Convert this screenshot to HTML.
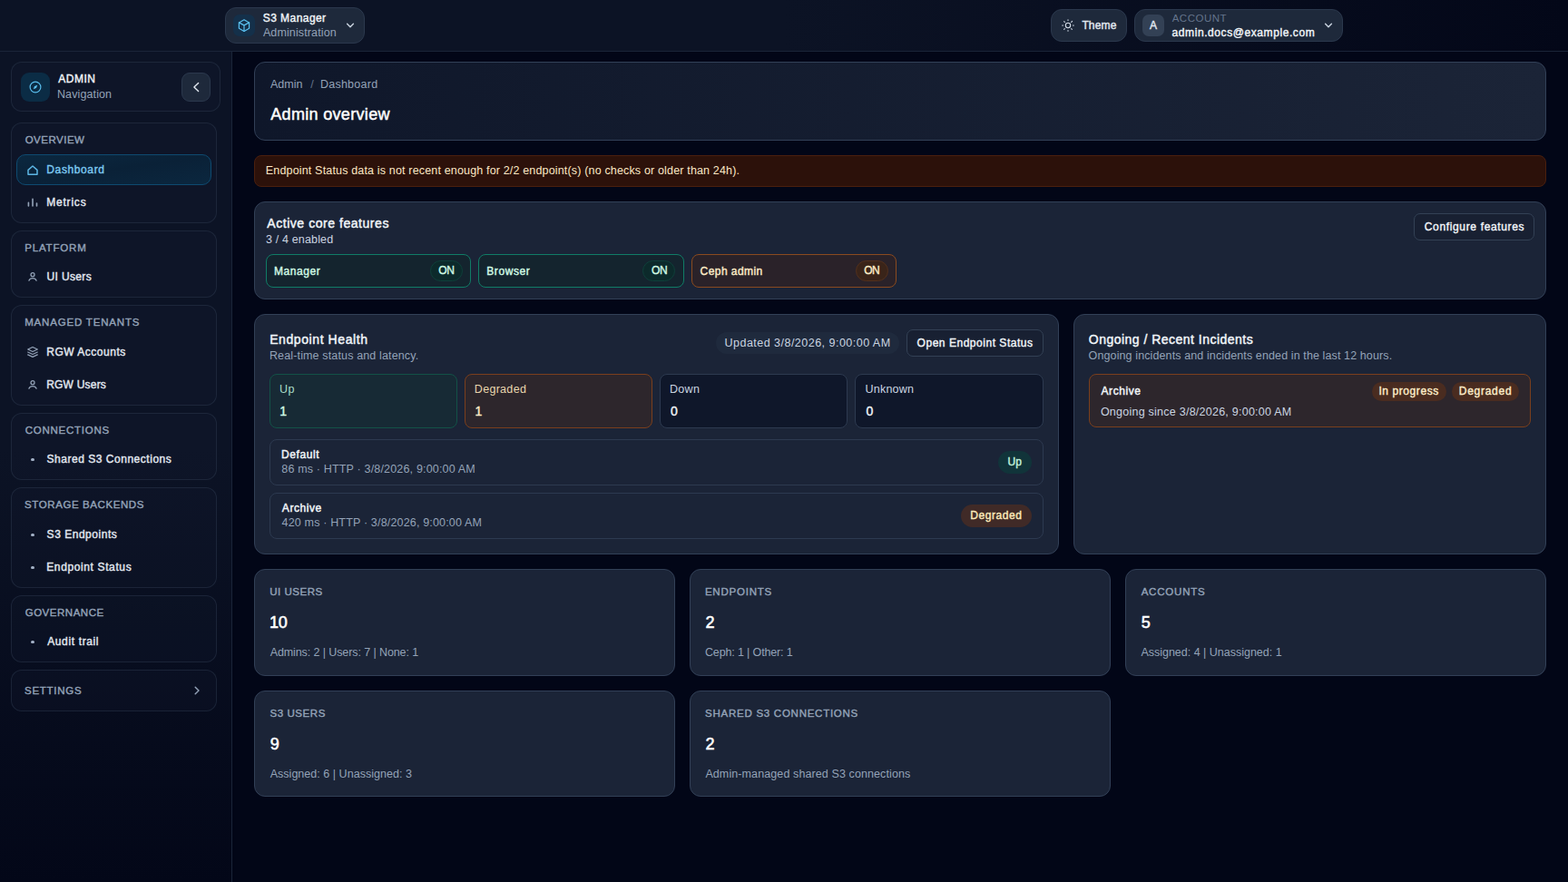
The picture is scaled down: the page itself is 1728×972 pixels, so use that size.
<!DOCTYPE html>
<html lang="en">
<head>
<meta charset="utf-8">
<title>S3 Manager - Admin overview</title>
<style>
*{box-sizing:border-box;margin:0;padding:0}
html,body{width:1728px;height:972px;overflow:hidden;background:#020617;}
body{font-family:"Liberation Sans",sans-serif;color:#e2e8f0;font-size:12px;position:relative;-webkit-font-smoothing:antialiased}
.abs{position:absolute}
.t{position:absolute;white-space:nowrap;line-height:1;display:block}
svg{display:block}
/* header */
#topbar{position:absolute;left:0;top:0;width:1728px;height:57px;background:linear-gradient(90deg,#0c1325 0%,#0c1325 50%,#030718 100%);border-bottom:1px solid #1a2438}
.pill{position:absolute;background:#1e293b;border:1px solid #2b384d;border-radius:12px}
/* sidebar */
#sidebar{position:absolute;left:0;top:57px;width:256px;height:915px;background:linear-gradient(180deg,#0c1325 0%,#0c1325 48%,#030718 100%);border-right:1px solid #1a2438}
#main{position:absolute;left:256px;top:57px;width:1472px;height:915px;background:#020617}
.sgroup{position:absolute;left:12px;width:227px;border:1px solid rgba(51,65,85,.42);border-radius:12px;background:rgba(30,41,59,.13)}
.slabel{position:absolute;left:15px;font-size:11.5px;font-weight:400;-webkit-text-stroke:.4px;color:#94a3b8;letter-spacing:.6px;line-height:1;white-space:nowrap}
.sitem{position:absolute;left:5px;width:215px;height:34px;border-radius:10px;border:1px solid transparent}
.sitem .lbl{position:absolute;left:33px;top:10px;font-size:12px;font-weight:400;-webkit-text-stroke:.4px;color:#e2e8f0;line-height:1;white-space:nowrap}
.sitem svg{position:absolute;left:10px;top:9px}
.sitem .dot{position:absolute;left:15.200px;top:14.500px;width:3.600px;height:3.600px;border-radius:50%;background:#a3b1c6}
.sitem.active{background:linear-gradient(to bottom right,#0b2840 0%,#0a2137 50%,#0b273f 100%);border-color:#0e4a70}
.sitem.active .lbl{color:#7cc8f0}
/* main */
.card{position:absolute;background:#1b2437;border:1px solid #324057;border-radius:12px}
.h{font-weight:400;-webkit-text-stroke:.45px;color:#f1f5f9}
.sb{font-weight:400;-webkit-text-stroke:.4px}
.mut{color:#94a3b8}
.badge{position:absolute;border-radius:999px;font-weight:400;-webkit-text-stroke:.4px;font-size:12px;line-height:1;white-space:nowrap}
.fpill{border-radius:8px;border:1px solid}
.fpill.g{background:#14242e;border-color:#107c66}
.fpill.o{background:#2a2229;border-color:#8a4a1f}
.fpill>.t{font-size:12px;font-weight:400;-webkit-text-stroke:.4px}
.fpill.g>.t{color:#d1fae5}.fpill.o>.t{color:#fdecc8}
.fpill .on{position:absolute;left:180px;top:6px;width:36px;height:23px;border-radius:12px;border:1px solid}
.fpill .on .t{font-size:12px;font-weight:400;-webkit-text-stroke:.4px}
.fpill.g .on{background:#0c2a2b;border-color:#0f3f3a}.fpill.g .on .t{color:#d1fae5}
.fpill.o .on{background:#3a2419;border-color:#52301d}.fpill.o .on .t{color:#fdecc8}
.sbox{border:1px solid #2d3a50;border-radius:8px;background:#0f172a}
.erow{border:1px solid #2d3a50;border-radius:8px;background:#1b2437}
.stat .sl{left:16px;top:18px;font-size:11.5px;font-weight:400;-webkit-text-stroke:.4px;color:#94a3b8;letter-spacing:.6px}
.stat .sn{left:16px;top:49px;font-size:18px;font-weight:400;-webkit-text-stroke:.55px;color:#fff}
.stat .ss{left:16px;top:85px;font-size:12.5px;color:#94a3b8}
</style>
</head>
<body>

<!-- TOP BAR -->
<header id="topbar">
  <div class="pill" id="appsw" style="left:248px;top:8px;width:154px;height:40px;border-radius:12px">
    <div class="abs" style="left:8px;top:7px;width:24px;height:24px;border-radius:7px;background:#14304a">
      <svg class="abs" style="left:5px;top:5px" width="14" height="14" viewBox="0 0 14 14" fill="none" stroke="#5bc0f0" stroke-width="1.200" stroke-linejoin="round" stroke-linecap="round"><path d="M7 .8 12.600 3.900v6.400L7 13.400 1.400 10.300V3.900z"/><path d="M1.400 3.900 7 6.900l5.600-3M7 6.900v6.500"/></svg>
    </div>
    <span class="t sb" id="t_s3m" style="left:40.74px;top:5px;font-size:12px;color:#f1f5f9;letter-spacing:0.445px">S3 Manager</span>
    <span class="t" id="t_adm" style="left:40.90px;top:21px;font-size:12.5px;color:#94a3b8;letter-spacing:0.120px">Administration</span>
    <svg class="abs" style="left:130px;top:12px" width="14" height="14" viewBox="0 0 14 14" fill="none" stroke="#cbd5e1" stroke-width="1.400" stroke-linecap="round" stroke-linejoin="round"><path d="M3.600 5.300 7 8.800l3.400-3.500"/></svg>
  </div>

  <div class="pill" id="themebtn" style="left:1158px;top:10px;width:84px;height:36px">
    <svg class="abs" style="left:11px;top:10px" width="14" height="14" viewBox="0 0 14 14" fill="none" stroke="#d5dde8" stroke-width="1.100" stroke-linecap="round"><circle cx="7" cy="7" r="2.700"/><path d="M7 .7v.8M7 12.500v.8M.7 7h.8M12.500 7h.8M2.700 2.700l.6.600M10.700 10.700l.6.600M2.700 11.300l.6-.6M10.700 3.300l.9-.9"/></svg>
    <span class="t sb" id="t_theme" style="left:33.42px;top:11px;font-size:12px;color:#e2e8f0;letter-spacing:0.137px">Theme</span>
  </div>

  <div class="pill" id="acct" style="left:1250px;top:10px;width:230px;height:36px">
    <div class="abs" style="left:8px;top:5px;width:24px;height:24px;border-radius:7px;background:#334155"></div>
    <span class="t sb" id="t_A" style="left:15.94px;top:11px;font-size:12px;color:#e2e8f0;letter-spacing:0.000px">A</span>
    <span class="t" id="t_account" style="left:40.66px;top:4px;font-size:11.5px;color:#64748b;letter-spacing:0.509px">ACCOUNT</span>
    <span class="t sb" id="t_email" style="left:40.55px;top:19px;font-size:12px;color:#f1f5f9;letter-spacing:0.581px">admin.docs@example.com</span>
    <svg class="abs" style="left:206px;top:10px" width="14" height="14" viewBox="0 0 14 14" fill="none" stroke="#cbd5e1" stroke-width="1.400" stroke-linecap="round" stroke-linejoin="round"><path d="M3.600 5.300 7 8.800l3.400-3.500"/></svg>
  </div>
</header>

<!-- SIDEBAR -->
<nav id="sidebar">
  <div class="abs" id="admincard" style="left:12px;top:11px;width:231px;height:55px;border:1px solid rgba(51,65,85,.42);border-radius:12px;background:rgba(30,41,59,.13)">
    <div class="abs" style="left:10px;top:11px;width:32px;height:32px;border-radius:9px;background:#0b2c45">
      <svg class="abs" style="left:9px;top:9px" width="14" height="14" viewBox="0 0 14 14" fill="none" stroke="#5bc0f0" stroke-width="1.150"><circle cx="7" cy="7" r="5.900"/><path d="M9.300 4.700 8 8 4.700 9.300 6 6z" fill="#5bc0f0" stroke="none"/></svg>
    </div>
    <span class="t sb" id="t_admin" style="left:51.17px;top:12px;font-size:12px;color:#f1f5f9;letter-spacing:0.544px">ADMIN</span>
    <span class="t" id="t_nav" style="left:49.94px;top:29px;font-size:12.5px;color:#94a3b8;letter-spacing:0.119px">Navigation</span>
    <div class="abs" style="left:187px;top:11px;width:32px;height:32px;border-radius:9px;background:#1e293b;border:1px solid #2b384d">
      <svg class="abs" style="left:8px;top:8px" width="14" height="14" viewBox="0 0 14 14" fill="none" stroke="#e2e8f0" stroke-width="1.400" stroke-linecap="round" stroke-linejoin="round"><path d="M9.600 2.600 4.900 7l4.700 4.500"/></svg>
    </div>
  </div>
  <div class="sgroup" style="top:78px;height:111px">
    <span class="slabel" id="t_sl0" style="left:14.66px;top:13px;letter-spacing:0.498px">OVERVIEW</span>
    <div class="sitem active" style="top:34px"><svg width="14" height="14" viewBox="0 0 14 14" fill="none" stroke="#5cb6e4" stroke-width="1.5" stroke-linejoin="round"><path d="M2 7.400 7 3l5 4.400v4.900H2z"/></svg><span class="lbl" id="t_si0" style="left:32.33px;top:10px;letter-spacing:0.611px">Dashboard</span></div>
    <div class="sitem" style="top:70px"><svg width="14" height="14" viewBox="0 0 14 14" fill="none" stroke="#94a3b8" stroke-width="1.600" stroke-linecap="round"><path d="M2.400 7.200V11M7 3.300V11M11.500 8V11"/></svg><span class="lbl" id="t_si1" style="left:32.21px;top:10px;letter-spacing:0.797px">Metrics</span></div>
  </div>
  <div class="sgroup" style="top:197px;height:74px">
    <span class="slabel" id="t_sl1" style="left:14.20px;top:13px;letter-spacing:0.842px">PLATFORM</span>
    <div class="sitem" style="top:33px"><svg width="14" height="14" viewBox="0 0 14 14" fill="none" stroke="#94a3b8" stroke-width="1.250" stroke-linecap="round"><circle cx="7" cy="4.700" r="2"/><path d="M2.900 11.200C4.200 7.700 9.800 7.700 11.100 11.200"/></svg><span class="lbl" id="t_si2" style="left:32.48px;top:10px;letter-spacing:0.362px">UI Users</span></div>
  </div>
  <div class="sgroup" style="top:279px;height:111px">
    <span class="slabel" id="t_sl2" style="left:14.21px;top:13px;letter-spacing:0.814px">MANAGED TENANTS</span>
    <div class="sitem" style="top:34px"><svg width="14" height="14" viewBox="0 0 14 14" fill="none" stroke="#94a3b8" stroke-width="1.200" stroke-linecap="round" stroke-linejoin="round"><path d="M7 1.500 12.300 4 7 6.500 1.700 4z"/><path d="M1.700 7 7 9.500 12.300 7"/><path d="M1.700 9.900 7 12.400l5.300-2.500"/></svg><span class="lbl" id="t_si3" style="left:32.21px;top:10px;letter-spacing:0.518px">RGW Accounts</span></div>
    <div class="sitem" style="top:70px"><svg width="14" height="14" viewBox="0 0 14 14" fill="none" stroke="#94a3b8" stroke-width="1.250" stroke-linecap="round"><circle cx="7" cy="4.700" r="2"/><path d="M2.900 11.200C4.200 7.700 9.800 7.700 11.100 11.200"/></svg><span class="lbl" id="t_si4" style="left:32.21px;top:10px;letter-spacing:0.206px">RGW Users</span></div>
  </div>
  <div class="sgroup" style="top:398px;height:74px">
    <span class="slabel" id="t_sl3" style="left:14.67px;top:13px;letter-spacing:0.749px">CONNECTIONS</span>
    <div class="sitem" style="top:33px"><i class="dot"></i><span class="lbl" id="t_si5" style="left:32.59px;top:10px;letter-spacing:0.522px">Shared S3 Connections</span></div>
  </div>
  <div class="sgroup" style="top:480px;height:111px">
    <span class="slabel" id="t_sl4" style="left:14.05px;top:13px;letter-spacing:0.594px">STORAGE BACKENDS</span>
    <div class="sitem" style="top:34px"><i class="dot"></i><span class="lbl" id="t_si6" style="left:32.61px;top:10px;letter-spacing:0.525px">S3 Endpoints</span></div>
    <div class="sitem" style="top:70px"><i class="dot"></i><span class="lbl" id="t_si7" style="left:32.22px;top:10px;letter-spacing:0.621px">Endpoint Status</span></div>
  </div>
  <div class="sgroup" style="top:599px;height:74px">
    <span class="slabel" id="t_sl5" style="left:14.67px;top:13px;letter-spacing:0.528px">GOVERNANCE</span>
    <div class="sitem" style="top:33px"><i class="dot"></i><span class="lbl" id="t_si8" style="left:33.17px;top:10px;letter-spacing:0.636px">Audit trail</span></div>
  </div>
  <div class="sgroup" style="top:681px;height:46px">
    <span class="slabel" id="t_sl6" style="left:14.05px;top:17px;letter-spacing:0.731px">SETTINGS</span>
    <svg class="abs" style="left:197px;top:15px" width="14" height="14" viewBox="0 0 14 14" fill="none" stroke="#94a3b8" stroke-width="1.400" stroke-linecap="round" stroke-linejoin="round"><path d="m5.200 3.200 3.800 3.800-3.800 3.800"/></svg>
  </div>
</nav>

<!-- MAIN -->
<main id="main">
  <!-- page header -->
  <div class="card" id="pagehead" style="left:24px;top:11px;width:1424px;height:87px;background:linear-gradient(90deg,#0f172a 0%,#1b2437 100%)">
    <span class="t mut" id="t_bc1" style="left:16.95px;top:18px;font-size:12.5px;letter-spacing:0.008px">Admin</span>
    <span class="t" id="t_bcs" style="left:61.32px;top:18px;font-size:12.5px;color:#64748b;letter-spacing:0.000px">/</span>
    <span class="t mut" id="t_bc2" style="left:71.96px;top:18px;font-size:12.5px;letter-spacing:0.247px">Dashboard</span>
    <span class="t h" id="t_title" style="left:17.28px;top:48px;font-size:18px;color:#fff;letter-spacing:0.322px">Admin overview</span>
  </div>

  <!-- alert -->
  <div class="abs" id="alert" style="left:24px;top:114px;width:1424px;height:35px;background:#2c110a;border:1px solid #4a1f0e;border-radius:8px">
    <span class="t" id="t_alert" style="left:11.83px;top:10px;font-size:12.5px;color:#fde8c4;letter-spacing:0.164px">Endpoint Status data is not recent enough for 2/2 endpoint(s) (no checks or older than 24h).</span>
  </div>

  <!-- features -->
  <div class="card" id="features" style="left:24px;top:165px;width:1424px;height:108px">
    <span class="t h" id="t_acf" style="left:13.31px;top:16px;font-size:14px;letter-spacing:0.547px">Active core features</span>
    <span class="t" id="t_34" style="left:11.90px;top:35px;font-size:12.5px;color:#cbd5e1;letter-spacing:0.165px">3 / 4 enabled</span>
    <div class="abs fbtn" style="left:1277px;top:12px;width:133px;height:30px;border:1px solid #334155;border-radius:7px;background:#182032">
      <span class="t sb" id="t_conf" style="left:10.78px;top:8px;font-size:12px;color:#f1f5f9;letter-spacing:0.653px">Configure features</span>
    </div>
    <div class="abs fpill g" style="left:12px;top:57px;width:226px;height:37px">
      <span class="t" id="t_f1" style="left:7.95px;top:12px;letter-spacing:0.566px">Manager</span>
      <span class="on"><span class="t" id="t_on1" style="left:8.33px;top:4px;letter-spacing:-0.502px">ON</span></span>
    </div>
    <div class="abs fpill g" style="left:246px;top:57px;width:227px;height:37px">
      <span class="t" id="t_f2" style="left:8.27px;top:12px;letter-spacing:0.590px">Browser</span>
      <span class="on"><span class="t" id="t_on2" style="left:9.06px;top:4px;letter-spacing:-0.259px">ON</span></span>
    </div>
    <div class="abs fpill o" style="left:481px;top:57px;width:226px;height:37px">
      <span class="t" id="t_f3" style="left:8.55px;top:12px;letter-spacing:0.439px">Ceph admin</span>
      <span class="on"><span class="t" id="t_on3" style="left:8.24px;top:4px;letter-spacing:-0.658px">ON</span></span>
    </div>
  </div>

  <!-- endpoint health -->
  <div class="card" id="health" style="left:24px;top:289px;width:887px;height:265px">
    <span class="t h" id="t_eh" style="left:16.15px;top:20px;font-size:14px;letter-spacing:0.588px">Endpoint Health</span>
    <span class="t mut" id="t_ehs" style="left:15.96px;top:39px;font-size:12.5px;letter-spacing:0.142px">Real-time status and latency.</span>
    <div class="abs" style="left:508px;top:19px;width:202px;height:24px;border-radius:12px;background:#1f2a3d">
      <span class="t" id="t_upd" style="left:9.53px;top:6px;font-size:12.5px;color:#cbd5e1;letter-spacing:0.481px">Updated 3/8/2026, 9:00:00 AM</span>
    </div>
    <div class="abs" style="left:718px;top:16px;width:151px;height:30px;border:1px solid #334155;border-radius:7px;background:#182032">
      <span class="t sb" id="t_oes" style="left:10.61px;top:8px;font-size:12px;color:#f1f5f9;letter-spacing:0.525px">Open Endpoint Status</span>
    </div>

    <div class="abs sbox" style="left:16px;top:65px;width:207px;height:60px;background:#172a35;border-color:#135247">
      <span class="t" id="t_b1" style="left:9.97px;top:10px;font-size:12.5px;color:#a8dcc8;letter-spacing:0.393px">Up</span>
      <span class="t sb" id="t_n1" style="left:10.28px;top:33px;font-size:14px;color:#d1fae5;letter-spacing:0.000px">1</span>
    </div>
    <div class="abs sbox" style="left:231px;top:65px;width:207px;height:60px;background:#2d262c;border-color:#7a3f1d">
      <span class="t" id="t_b2" style="left:9.80px;top:10px;font-size:12.5px;color:#e9d6ae;letter-spacing:0.306px">Degraded</span>
      <span class="t sb" id="t_n2" style="left:10.44px;top:33px;font-size:14px;color:#fdecc8;letter-spacing:0.000px">1</span>
    </div>
    <div class="abs sbox" style="left:446px;top:65px;width:207px;height:60px">
      <span class="t" id="t_b3" style="left:9.95px;top:10px;font-size:12.5px;color:#cbd5e1;letter-spacing:0.313px">Down</span>
      <span class="t sb" id="t_n3" style="left:11.08px;top:33px;font-size:14px;color:#f1f5f9;letter-spacing:0.000px">0</span>
    </div>
    <div class="abs sbox" style="left:661px;top:65px;width:208px;height:60px">
      <span class="t" id="t_b4" style="left:10.59px;top:10px;font-size:12.5px;color:#cbd5e1;letter-spacing:0.196px">Unknown</span>
      <span class="t sb" id="t_n4" style="left:11.42px;top:33px;font-size:14px;color:#f1f5f9;letter-spacing:0.000px">0</span>
    </div>

    <div class="abs erow" style="left:16px;top:137px;width:853px;height:51px">
      <span class="t h" id="t_r1" style="left:12.05px;top:10px;font-size:12px;letter-spacing:0.591px">Default</span>
      <span class="t mut" id="t_r1s" style="left:12.26px;top:26px;font-size:12.5px;letter-spacing:0.175px">86 ms · HTTP · 3/8/2026, 9:00:00 AM</span>
      <span class="badge" style="left:802px;top:12px;width:37px;height:25px;background:#11343a;color:#c3f3dd"><span class="t" id="t_bup" style="left:10.41px;top:6px;letter-spacing:0.269px">Up</span></span>
    </div>
    <div class="abs erow" style="left:16px;top:196px;width:853px;height:51px">
      <span class="t h" id="t_r2" style="left:12.82px;top:10px;font-size:12px;letter-spacing:0.569px">Archive</span>
      <span class="t mut" id="t_r2s" style="left:12.56px;top:26px;font-size:12.5px;letter-spacing:0.169px">420 ms · HTTP · 3/8/2026, 9:00:00 AM</span>
      <span class="badge" style="left:761px;top:12px;width:78px;height:25px;background:#402a27;color:#fdeabb"><span class="t" id="t_bdg" style="left:10.18px;top:6px;letter-spacing:0.575px">Degraded</span></span>
    </div>
  </div>

  <!-- incidents -->
  <div class="card" id="incidents" style="left:927px;top:289px;width:521px;height:265px">
    <span class="t h" id="t_inc" style="left:15.77px;top:20px;font-size:14px;letter-spacing:0.481px">Ongoing / Recent Incidents</span>
    <span class="t mut" id="t_incs" style="left:15.61px;top:39px;font-size:12.5px;letter-spacing:0.112px">Ongoing incidents and incidents ended in the last 12 hours.</span>
    <div class="abs" style="left:16px;top:65px;width:487px;height:59px;border:1px solid #7a3f1d;border-radius:8px;background:#2d262c">
      <span class="t h" id="t_ia" style="left:12.50px;top:12px;font-size:12px;letter-spacing:0.586px">Archive</span>
      <span class="t" id="t_ias" style="left:11.90px;top:35px;font-size:12.5px;color:#cbd5e1;letter-spacing:0.246px">Ongoing since 3/8/2026, 9:00:00 AM</span>
      <span class="badge" style="left:311px;top:8px;width:82px;height:21px;background:#4a2c20;color:#fdecc8"><span class="t" id="t_ip" style="left:7.42px;top:4px;letter-spacing:0.583px">In progress</span></span>
      <span class="badge" style="left:399px;top:8px;width:74px;height:21px;background:#4a2c20;color:#fdecc8"><span class="t" id="t_idg" style="left:7.78px;top:4px;letter-spacing:0.731px">Degraded</span></span>
    </div>
  </div>

  <!-- stat cards -->
  <div class="card stat" style="left:24px;top:570px;width:464px;height:118px">
    <span class="t sl" id="t_c1l" style="left:16.13px;top:19px;letter-spacing:0.532px">UI USERS</span><span class="t sn" id="t_c1n" style="left:15.93px;top:49px;letter-spacing:-0.277px">10</span><span class="t ss" id="t_c1s" style="left:16.65px;top:85px;letter-spacing:-0.095px">Admins: 2 | Users: 7 | None: 1</span>
  </div>
  <div class="card stat" style="left:504px;top:570px;width:464px;height:118px">
    <span class="t sl" id="t_c2l" style="left:15.90px;top:19px;letter-spacing:0.782px">ENDPOINTS</span><span class="t sn" id="t_c2n" style="left:16.60px;top:49px;letter-spacing:0.000px">2</span><span class="t ss" id="t_c2s" style="left:15.96px;top:85px;letter-spacing:-0.138px">Ceph: 1 | Other: 1</span>
  </div>
  <div class="card stat" style="left:984px;top:570px;width:464px;height:118px">
    <span class="t sl" id="t_c3l" style="left:16.67px;top:19px;letter-spacing:0.788px">ACCOUNTS</span><span class="t sn" id="t_c3n" style="left:16.71px;top:49px;letter-spacing:0.000px">5</span><span class="t ss" id="t_c3s" style="left:16.38px;top:85px;letter-spacing:-0.007px">Assigned: 4 | Unassigned: 1</span>
  </div>
  <div class="card stat" style="left:24px;top:704px;width:464px;height:117px">
    <span class="t sl" id="t_c4l" style="left:16.38px;top:19px;letter-spacing:0.591px">S3 USERS</span><span class="t sn" id="t_c4n" style="left:16.80px;top:49px;letter-spacing:0.000px">9</span><span class="t ss" id="t_c4s" style="left:16.65px;top:85px;letter-spacing:0.032px">Assigned: 6 | Unassigned: 3</span>
  </div>
  <div class="card stat" style="left:504px;top:704px;width:464px;height:117px">
    <span class="t sl" id="t_c5l" style="left:16.09px;top:19px;letter-spacing:0.740px">SHARED S3 CONNECTIONS</span><span class="t sn" id="t_c5n" style="left:16.60px;top:49px;letter-spacing:0.000px">2</span><span class="t ss" id="t_c5s" style="left:16.38px;top:85px;letter-spacing:0.105px">Admin-managed shared S3 connections</span>
  </div>
</main>

</body>
</html>
